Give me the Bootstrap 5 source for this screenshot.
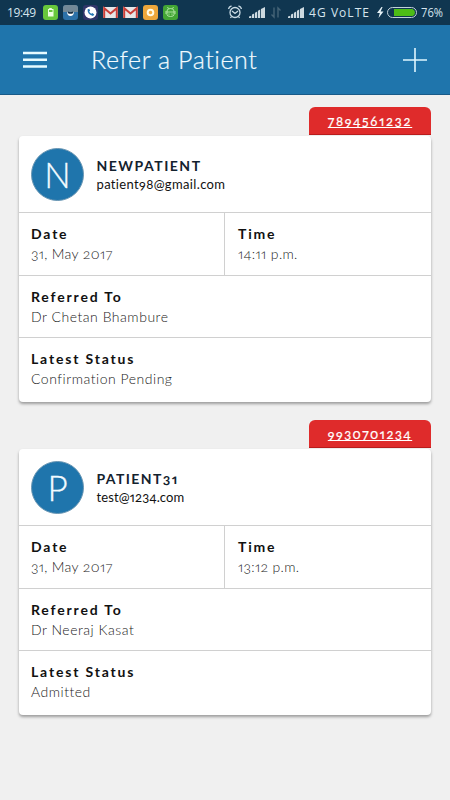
<!DOCTYPE html>
<html lang="en">
<head>
<meta charset="utf-8">
<meta name="viewport" content="width=device-width, initial-scale=1">
<title>Refer a Patient</title>
<link href="https://cdn.jsdelivr.net/npm/bootstrap@5.3.0/dist/css/bootstrap.min.css" rel="stylesheet">
<style>
body{background:#f0f0f0;font-family:Lato,"Liberation Sans",sans-serif;font-size:14px;line-height:20px;color:#111;height:800px;overflow:hidden;font-variant-numeric:oldstyle-nums proportional-nums}
.statusbar{height:25px;background:#103650;font-variant-numeric:normal}
.statusbar svg{display:block}
.appbar{height:70px;background:#1f75ac;border-bottom:1px solid #185a88;color:#f2fbff;padding:0 22px}
.apptitle{font-size:25px;font-weight:300;line-height:69px;margin-left:43px;letter-spacing:.58px;-webkit-text-stroke:.2px #f2fbff}
.cards{padding:12px 19px 0}
.patient{height:295px;margin-bottom:18px}
.phone{width:122px;height:28px;line-height:28px;background:#df2b2b;border-bottom:1px solid #b91c1c;border-radius:6px 6px 0 0;color:#fff;font-size:13px;letter-spacing:1.75px;-webkit-text-stroke:.2px #fff}
.phone-tight{letter-spacing:1.5px}
.phone:hover{color:#fff}
.panel{height:266px;margin-top:1px;background:#fff;border-radius:4px;box-shadow:0 2px 3px rgba(0,0,0,.35);overflow:hidden}
.person{height:77px;padding:12px 12px 0;border-bottom:1px solid #d0d0d0}
.initial{width:53px;height:53px;background:#1f75ac;border:1px solid #6a96b3;color:#f2fbff;font-weight:300;font-size:35px;line-height:50px;-webkit-text-stroke:.3px #f2fbff}
.idblock{padding:8px 0 0 12.5px}
.pname{font-weight:700;color:#13222e;letter-spacing:1.5px;line-height:19px}
.pname-tight{letter-spacing:1.4px}
.mail{font-size:13px;line-height:18px;letter-spacing:.35px;color:#111}
.mail-tight{letter-spacing:.13px}
.cell{padding:11px 12px 0;height:63px;border-bottom:1px solid #d0d0d0}
.cell-short{height:62px}
.cell-last{border-bottom:0;height:65px}
.cell-left{width:206px;border-right:1px solid #d0d0d0}
.cell-right{padding-left:13px}
.caption-text{font-weight:700;letter-spacing:1.83px}
.value{font-weight:300;color:#222;letter-spacing:.52px}
.value-date{letter-spacing:.35px}
.value-time{letter-spacing:.35px}
</style>
</head>
<body>
<div class="statusbar">
<svg width="450" height="25" viewBox="0 0 450 25">
<g font-family="Open Sans, sans-serif" font-size="12" fill="#d5e5ee">
<text x="7" y="17" textLength="29">19:49</text>
<text x="309" y="17" textLength="60">4G VoLTE</text>
<text x="421" y="16.5" textLength="22" lengthAdjust="spacingAndGlyphs">76%</text>
</g>
<rect x="43" y="5" width="15" height="15" rx="3" fill="#68c83c"/><path d="M48 9h1.200v-1h2.600v1h1.700v7.500h-5.500z" fill="#edffe2"/><rect x="49" y="10" width="3.500" height="2" fill="#68c83c"/>
<rect x="63" y="5" width="15" height="15" rx="3" fill="#2c71a8"/><path d="M63 12V8a3 3 0 0 1 3-3h9a3 3 0 0 1 3 3v4z" fill="#728896"/><path d="M67 12q3.500 2 7 0q-.300 4-3.500 4t-3.500-4z" fill="#fff"/><path d="M68 12.300q2.500 1.500 5 0" fill="none" stroke="#172b3d" stroke-width="1.600"/>
<rect x="83" y="5" width="15" height="15" rx="3" fill="#303669"/><circle cx="90.500" cy="12.500" r="6" fill="#fff"/><path d="M87.500 9.500q0 5 5.500 6.500l1.300-1.600-2-1.400-1 .8q-1.700-.9-2.100-2.300l.9-.7-.9-2z" fill="#2476b2"/>
<g id="gm"><rect x="103" y="7" width="15" height="11" rx="1" fill="#e8e6e7"/><path d="M104.200 18V8.200l6.300 5.300 6.300-5.300V18" fill="none" stroke="#c93e38" stroke-width="2"/></g>
<use href="#gm" x="20"/>
<rect x="143" y="5" width="15" height="15" rx="3" fill="#eda73b"/><circle cx="150.500" cy="12.500" r="2.800" fill="#f3ae43" stroke="#fffbe5" stroke-width="2"/>
<rect x="163" y="5" width="15" height="15" rx="3" fill="#43a635"/><path d="M167 11q0-2.500 3.500-2.500T174 11v3.500q0 2-3.500 2t-3.500-2zM168.500 8.700 167.500 7M172.500 8.700 173.500 7M166 11v3M175 11v3M167 12h7" stroke="#b9eaac" fill="none" stroke-width=".9"/><circle cx="169" cy="14" r=".6" fill="#d9ffcf"/><circle cx="172" cy="14" r=".6" fill="#d9ffcf"/>
<g fill="none" stroke="#c9dbe5" stroke-width="1.300"><circle cx="235" cy="12.500" r="5"/><path d="M232 11l3 2.500 3-2.500M231.500 16.500 230.500 18M238.500 16.500l1 1.500M228.500 9q.500-2.500 3-3M241.500 9q-.500-2.500-3-3"/></g>
<g id="sig" fill="#ccd9e0"><path d="M249 18v-1.500l2.300-.8V18zM252 18v-3.400l2.200-1V18zM255 18v-5.200l2.200-1.200V18zM258 18v-7.200l2.200-1.300V18zM261 18V8.900l4-2V18z"/></g>
<use href="#sig" x="39"/>
<path d="M274 7.500V17l-2.500-2.500M278 17.500V8l2.500 2.500" fill="none" stroke="#466477" stroke-width="1.400"/>
<path d="M381.500 7l-4.500 6h2.800l-1.300 5 5-6.500h-2.900l2-4.500z" fill="#e7f2f7"/>
<rect x="387.500" y="7.500" width="29" height="10" rx="5" fill="#103650" stroke="#c2d1d9"/><path d="M394 9h18.500q2.500 1 2.500 3.500t-2.500 3.500H394z" fill="#4dbd16"/>
</svg>
</div>
<header class="appbar d-flex align-items-center">
<svg width="26" height="26" viewBox="0 0 26 26" stroke="#e6fbff" stroke-width="2.500"><path d="M1 6h24M1 12.800h24M1 19.600h24"/></svg>
<h1 class="apptitle mb-0">Refer a Patient</h1>
<svg class="ms-auto" width="26" height="26" viewBox="0 0 26 26" stroke="#e0f7ff" stroke-width="1.600"><path d="M1 13h24M13 1v24"/></svg>
</header>
<main class="cards">
<section class="patient">
<a href="#" class="phone d-block ms-auto text-center">7894561232</a>
<div class="panel">
<div class="person d-flex"><div class="initial rounded-circle text-center flex-shrink-0">N</div><div class="idblock"><div class="pname">NEWPATIENT</div><div class="mail">patient98@gmail.com</div></div></div>
<div class="d-flex"><div class="cell cell-left"><div class="caption-text">Date</div><div class="value value-date">31, May 2017</div></div><div class="cell cell-right flex-grow-1"><div class="caption-text">Time</div><div class="value value-time">14:11 p.m.</div></div></div>
<div class="cell cell-short"><div class="caption-text">Referred To</div><div class="value">Dr Chetan Bhambure</div></div>
<div class="cell cell-last"><div class="caption-text">Latest Status</div><div class="value">Confirmation Pending</div></div>
</div>
</section>
<section class="patient">
<a href="#" class="phone phone-tight d-block ms-auto text-center">9930701234</a>
<div class="panel">
<div class="person d-flex"><div class="initial rounded-circle text-center flex-shrink-0">P</div><div class="idblock"><div class="pname pname-tight">PATIENT31</div><div class="mail mail-tight">test@1234.com</div></div></div>
<div class="d-flex"><div class="cell cell-left"><div class="caption-text">Date</div><div class="value value-date">31, May 2017</div></div><div class="cell cell-right flex-grow-1"><div class="caption-text">Time</div><div class="value value-time">13:12 p.m.</div></div></div>
<div class="cell cell-short"><div class="caption-text">Referred To</div><div class="value">Dr Neeraj Kasat</div></div>
<div class="cell cell-last"><div class="caption-text">Latest Status</div><div class="value">Admitted</div></div>
</div>
</section>
</main>
<script src="https://cdn.jsdelivr.net/npm/bootstrap@5.3.0/dist/js/bootstrap.bundle.min.js"></script>
</body>
</html>
